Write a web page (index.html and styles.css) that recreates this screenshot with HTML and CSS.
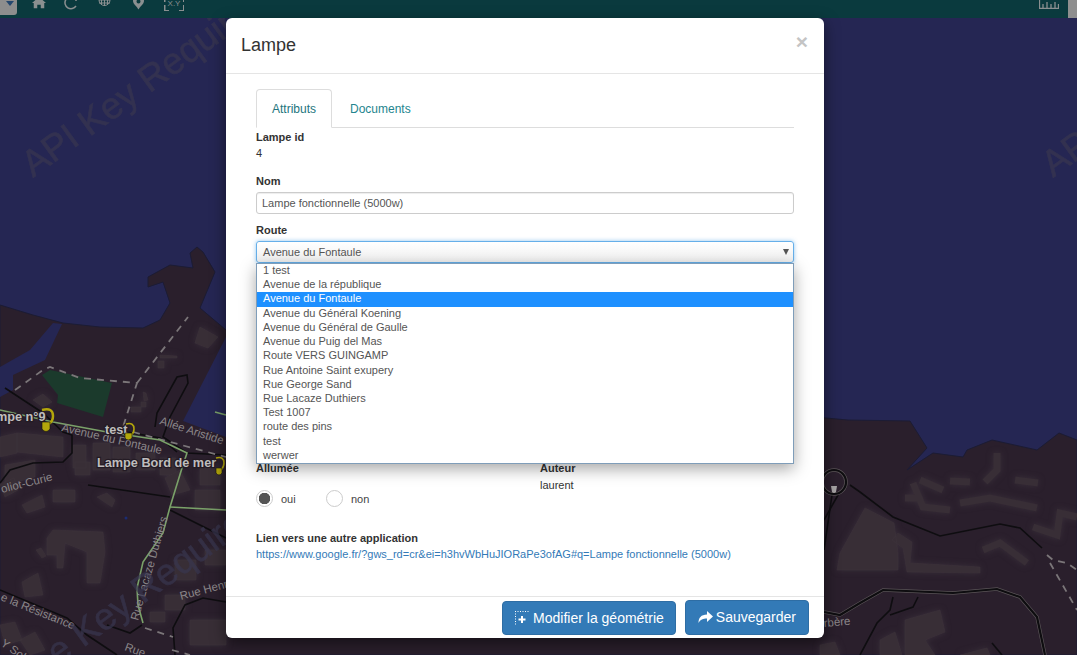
FILE: index.html
```html
<!DOCTYPE html>
<html lang="fr">
<head>
<meta charset="utf-8">
<title>Lampe</title>
<link rel="stylesheet" href="styles.css">
</head>
<body>
<svg class="map" viewBox="0 0 1077 655" width="1077" height="655" aria-hidden="true">
  <rect class="water" x="0" y="0" width="1077" height="655"/>
  <path class="land" d="M0 305L33 315L63 323L100 327L143 328L160 320L170 303L163 282L148 287L148 277L170 265L193 268L190 253L197 247L203 252L215 272L200 308L226 330L400 380L848 420L910 421L927 448L907 470L933 453L963 457L967 450L992 440L1037 450L1059 433L1077 440V655H0Z"/>
  <path class="water" d="M53 323L62 324L45 360L13 375L13 390L0 397V367L30 350ZM226 337L183 421L226 437Z"/>
  <path class="park" d="M42 375L50 370L112 383L103 417L57 403L58 395Z"/>
  <g class="bld">
    <path d="M0 437L17 433L17 453L0 457ZM17 433L63 437L63 457L17 452ZM33 400L43 394L52 402L43 407ZM200 327L218 337L208 348L195 343Z"/>
    <path d="M160 355L177 356V358H160ZM158 361H164V368H158ZM143 392L146 393L148 400L144 401ZM131 407H141V412H131ZM141 402H146V407H141ZM73 445H86V468H73ZM93 443H110V470H93ZM113 447H130V472H113ZM136 453H155V470H136ZM160 458H176V475H160ZM75 462H90V475H75ZM200 468H220V485H200Z"/>
    <path d="M47 538L53 530L103 532L105 552L100 583L87 583L87 552L65 543L63 568L57 568L57 555L47 555Z"/>
    <path d="M53 490H75V502H53ZM22 505L42 495L45 507L27 513ZM0 484L14 478L18 490L5 497ZM97 497L107 493L115 500L112 507ZM22 582L38 573L43 595L25 597ZM36 550L41 548L46 556L42 558ZM5 465L35 460V477L5 485ZM165 478L180 470L190 490L172 495ZM195 490H220V510H195ZM175 560H196V580H175ZM205 550H226V565H205ZM165 595H185V610H165ZM190 620H226V645H190ZM150 612H165V622H150ZM0 625L15 622L22 640L5 645ZM20 640L35 632L45 650L30 655Z"/>
    <path d="M865 508L894 523L898 553L898 570L837 570L840 553ZM898 533L912 542L910 563L980 567L980 573L907 572L903 548L892 540Z"/>
    <path d="M820 645L835 642L840 655H820ZM880 640L895 632L902 655H880ZM905 620L940 610L945 632L925 640L935 655H905ZM960 655L987 648L990 655Z"/>
  </g>
  <g class="bldl">
    <polyline points="997,453 997,470 985,482"/>
    <polyline points="1015,480 1038,483"/>
    <polyline points="950,481 970,482"/>
    <polyline points="913,483 923,507 950,510"/>
    <polyline points="905,498 920,498"/>
    <polyline points="920,480 943,490"/>
    <polyline points="960,503 990,498 1037,508"/>
    <polyline points="1033,527 1057,535 1060,513 1077,517"/>
    <polyline points="983,550 1000,543 1027,563"/>
  </g>
  <g class="road">
    <polyline points="5,388 43,413 63,432 72,435 72,453 63,462 33,463 10,470 0,483"/>
    <polyline points="155,427 157,413 177,377 187,375 188,383 170,417 163,437 187,453 226,455"/>
    <polyline points="127,432 160,438 177,452"/>
    <polyline points="88,485 170,497"/>
    <polyline points="170,510 226,538"/>
    <polyline points="0,590 67,618 87,635 117,655"/>
    <polyline points="107,625 130,633 142,625"/>
    <polyline points="175,655 173,628 185,605 203,598 226,602"/>
    <polyline points="850,485 860,492 893,517 940,536 1000,524 1020,528 1042,548"/>
    <polyline points="893,597 890,610 877,623 860,655"/>
    <polyline points="918,597 913,607 890,615"/>
    <polyline points="992,643 1002,655"/>
    <polyline points="832,495 824,550"/>
    <polyline points="838,495 824,520"/>
  </g>
  <g class="casing">
    <polyline points="824,612 840,615 860,603 883,590 953,593 997,589 1020,597 1037,617 1045,655"/>
    <circle cx="834" cy="482" r="12"/>
  </g>
  <g class="core">
    <polyline points="824,612 840,615 860,603 883,590 953,593 997,589 1020,597 1037,617 1045,655"/>
    <circle cx="834" cy="482" r="12"/>
  </g>
  <g class="dash">
    <polyline points="15,390 43,370 50,367 80,378 137,383 123,427"/>
    <polyline points="137,383 188,317"/>
    <polyline points="133,432 226,457"/>
    <polyline points="145,628 173,637"/>
    <polyline points="172,650 190,655"/>
    <polyline points="1047,555 1053,560 1067,563 1077,570"/>
    <polyline points="1050,563 1077,610"/>
  </g>
  <g class="green">
    <polyline points="0,410 53,422 107,432 160,440 187,453 182,468 170,507 163,533 143,562 137,588 138,605 143,623"/>
    <polyline points="170,507 226,510"/>
    <polyline points="215,412 226,415"/>
  </g>
  <circle class="dot" cx="126" cy="518" r="1.5"/>
  <g class="street">
    <text transform="translate(61 431) rotate(13)">Avenue du Fontaule</text>
    <text transform="translate(159 424) rotate(18)">Allée Aristide</text>
    <text transform="translate(2 493) rotate(-14)">oliot-Curie</text>
    <text transform="translate(0 600) rotate(22)">e la Résistance</text>
    <text transform="translate(138 621) rotate(-74)">Rue Lacaze Duthiers</text>
    <text transform="translate(181 600) rotate(-15)">Rue Henri</text>
    <text transform="translate(124 650) rotate(20)">Rue</text>
    <text transform="translate(0 645) rotate(35)">Y Sol</text>
    <text x="824" y="627" transform="rotate(-5 824 627)">rbère</text>
  </g>
  <g class="lamplabel">
    <text x="-4" y="421">mpe n°9</text>
    <text x="105" y="434">test</text>
    <text x="97" y="467">Lampe Bord de mer</text>
  </g>
  <g class="lamp">
    <path class="bulbring" d="M42 410Q53 407 53 416Q53 421 49 424"/>
    <path class="bulbbody" d="M42 422H50V429Q46 434 42 429Z"/>
    <path class="bulbring thin" d="M126 424Q134 422 134 429Q134 433 131 435"/>
    <path class="bulbbody" d="M125 433H132V438Q128 442 125 438Z"/>
    <path class="bulbring thin" d="M216 458Q224 456 224 463Q224 467 221 470"/>
    <path class="bulbbody" d="M216 468H222V473Q219 477 216 473Z"/>
    <path class="bulbgrey" d="M831 486H837L836 492Q834 494 832 492Z"/>
  </g>
  <g class="wm">
    <text transform="translate(33 178) rotate(-36)">API Key Required</text>
    <text transform="translate(1053 178) rotate(-36)">API</text>
    <text transform="translate(58 666) rotate(-36)">e Key Required</text>
  </g>
</svg>

<header class="topbar">
  <div class="drop"><span class="caret"></span></div>
  <nav class="tools">
    <svg class="ico home" width="14" height="14" viewBox="0 0 16 14"><path d="M8 0L16 7H14V13H10V9H6V13H2V7H0Z"/></svg>
    <svg class="ico stroke reload" width="14" height="14" viewBox="0 0 14 14"><path d="M12 10A6 6 0 1 1 10 1.500L12 0V5"/></svg>
    <svg class="ico stroke thin globe" width="13" height="14" viewBox="0 0 13 14"><circle cx="6.500" cy="4" r="5.500"/><path d="M1 4H12M1 1H12M1 7H12M6.500 -2V10M3.500 -1V9M9.500 -1V9"/></svg>
    <svg class="pin" width="11" height="10" viewBox="0 0 11 10"><path fill-rule="evenodd" d="M0 1A5.500 5.500 0 0 1 11 1C11 4 7 6.500 5.500 9.500C4 6.500 0 4 0 1ZM5.500 -.5A2 2 0 1 0 5.500 3.500A2 2 0 1 0 5.500 -.5Z"/></svg>
    <span class="xy">X.Y</span>
  </nav>
  <div class="topright">
    <svg class="ruler" width="20" height="10" viewBox="0 0 20 10"><path d="M.5 0V9.500H19.500V5M4 9V5M8 9V3M12 9V5M16 9V3"/></svg>
    <div class="greytab"></div>
  </div>
</header>

<section class="modal">
  <div class="modal-head">
    <h4>Lampe</h4>
    <span class="close">×</span>
  </div>
  <div class="modal-body">
    <ul class="tabs">
      <li class="tab active">Attributs</li>
      <li class="tab">Documents</li>
    </ul>
    <div class="group first">
      <label>Lampe id</label>
      <div class="value">4</div>
    </div>
    <div class="group">
      <label>Nom</label>
      <div class="input">Lampe fonctionnelle (5000w)</div>
    </div>
    <div class="group route">
      <label>Route</label>
      <div class="input select">Avenue du Fontaule<span class="arrow"></span></div>
      <ul class="options">
        <li>1 test</li>
        <li>Avenue de la république</li>
        <li class="sel">Avenue du Fontaule</li>
        <li>Avenue du Général Koening</li>
        <li>Avenue du Général de Gaulle</li>
        <li>Avenue du Puig del Mas</li>
        <li>Route VERS GUINGAMP</li>
        <li>Rue Antoine Saint exupery</li>
        <li>Rue George Sand</li>
        <li>Rue Lacaze Duthiers</li>
        <li>Test 1007</li>
        <li>route des pins</li>
        <li>test</li>
        <li>werwer</li>
      </ul>
    </div>
    <div class="cols">
      <div class="col">
        <label>Allumée</label>
        <div class="radios">
          <span class="radio on"></span><span class="rlabel">oui</span>
          <span class="radio"></span><span class="rlabel">non</span>
        </div>
      </div>
      <div class="col">
        <label>Auteur</label>
        <div class="value author">laurent</div>
      </div>
    </div>
    <div class="group linkgroup">
      <label>Lien vers une autre application</label>
      <a class="link">https://www.google.fr/?gws_rd=cr&amp;ei=h3hvWbHuJIORaPe3ofAG#q=Lampe fonctionnelle (5000w)</a>
    </div>
  </div>
  <div class="modal-foot">
    <button class="btn low">
      <svg class="btnico" width="15" height="15" viewBox="0 0 15 15"><path class="dots" d="M.5 0V15M0 .5H15"/><path class="plus" d="M6 5H8V7.500H10.500V9.500H8V12H6V9.500H3.500V7.500H6Z"/></svg>
      Modifier la géométrie
    </button>
    <button class="btn">
      <svg class="btnico" width="15" height="13" viewBox="0 0 15 13"><path class="plus" d="M9 0L15 5.500L9 11V7.500C5 7.500 2.500 8.500 .5 12C.5 7 3 3.500 9 3.500Z"/></svg>
      Sauvegarder
    </button>
  </div>
</section>
</body>
</html>
```
FILE: styles.css
```css
* { box-sizing: border-box; }
html, body { margin: 0; height: 100%; }
body {
  position: relative;
  width: 1077px;
  height: 655px;
  overflow: hidden;
  background: #262552;
  font-family: "Liberation Sans", Arial, sans-serif;
  color: #333;
}

/* map canvas */
.map { position: absolute; left: 0; top: 0; display: block; }
.water { fill: #252653; }
.land { fill: #2a1f2c; stroke: #1c1c34; stroke-width: 1; }
.park { fill: #1b3a2c; }
.bld { fill: #382e36; stroke: #3f343c; stroke-width: .5; filter: drop-shadow(0 0 3px rgba(70, 60, 70, .55)); }
.bldl { filter: drop-shadow(0 0 3px rgba(70, 60, 70, .55)); }
.bldl polyline { fill: none; stroke: #382e36; stroke-width: 7; }
.road polyline { fill: none; stroke: #0e0d10; stroke-width: 1.600; }
.casing polyline, .casing circle { fill: none; stroke: #5b5558; stroke-width: 3.500; }
.core polyline, .core circle { fill: none; stroke: #0e0d10; stroke-width: 2.200; }
.dash polyline { fill: none; stroke: #7b7679; stroke-width: 1.800; stroke-dasharray: 7 6; }
.green polyline { fill: none; stroke: #7aa169; stroke-width: 1.600; }
.dot { fill: #1b2c73; }
.street text { font-size: 11.500px; fill: #8b8689; }
.lamplabel text {
  font-size: 12.700px;
  font-weight: 700;
  fill: #bfbdbd;
  stroke: #241b24;
  stroke-width: 2.500px;
  paint-order: stroke;
}
.bulbring { fill: none; stroke: #b3a60b; stroke-width: 2.500; }
.bulbring.thin { stroke-width: 1.600; }
.bulbbody { fill: #b3a60b; stroke: #15120f; stroke-width: .6; }
.bulbgrey { fill: #a8a5a6; }
.wm text { font-size: 37px; fill: #393750; stroke: #393750; stroke-width: .6; opacity: .7; }

/* top bar */
.topbar {
  position: relative;
  height: 18px;
  background: #0a3a3e;
  display: flex;
  align-items: flex-start;
  overflow: hidden;
}
.drop {
  width: 17px;
  height: 15px;
  background: #8d8d8d;
  border-bottom-right-radius: 3px;
  padding: 1px 0 0 6px;
}
.caret {
  display: block;
  width: 0;
  height: 0;
  border-left: 4px solid transparent;
  border-right: 4px solid transparent;
  border-top: 5px solid #24476e;
}
.tools { display: flex; align-items: flex-start; margin-left: 15px; }
.ico { fill: #8a8f90; display: block; margin-top: -4px; }
.ico.stroke { fill: none; stroke: #8a8f90; stroke-width: 1.500; }
.ico.stroke.thin { stroke-width: 1; }
.reload { margin-left: 18px; }
.globe { margin-left: 20px; }
.pin { display: block; fill: #8a8f90; margin-left: 22px; }
.xy {
  width: 20px;
  height: 11px;
  margin-left: 20px;
  font-size: 8px;
  line-height: 8px;
  text-align: center;
  color: #8a8f90;
  background:
    linear-gradient(#8a8f90, #8a8f90) left bottom / 5px 1.500px no-repeat,
    linear-gradient(#8a8f90, #8a8f90) right bottom / 5px 1.500px no-repeat,
    linear-gradient(#8a8f90, #8a8f90) left bottom / 1.500px 6px no-repeat,
    linear-gradient(#8a8f90, #8a8f90) right bottom / 1.500px 6px no-repeat,
    linear-gradient(#8a8f90, #8a8f90) left top / 1.500px 2px no-repeat,
    linear-gradient(#8a8f90, #8a8f90) right top / 1.500px 2px no-repeat;
}
.topright { margin-left: auto; display: flex; align-items: flex-start; gap: 9px; }
.ruler { fill: none; stroke: #8a8f90; stroke-width: 1.300; display: block; margin-top: -1px; }
.greytab { width: 9px; height: 18px; background: #8f8f8f; }

/* modal */
.modal {
  position: absolute;
  left: 226px;
  top: 18px;
  width: 598px;
  height: 620px;
  background: #fff;
  border-radius: 6px;
  box-shadow: 0 5px 15px rgba(0, 0, 0, .5);
  display: flex;
  flex-direction: column;
}
.modal-head {
  height: 56px;
  flex: none;
  border-bottom: 1px solid #e5e5e5;
  padding: 15px;
  display: flex;
  justify-content: space-between;
  align-items: flex-start;
}
.modal-head h4 {
  margin: 0;
  font-size: 18px;
  line-height: 25px;
  font-weight: 400;
  color: #333;
}
.close {
  font-size: 21px;
  font-weight: 700;
  line-height: 18px;
  color: #c4c4c4;
  margin: 0 1px 0 0;
}
.modal-body { flex: 1; padding: 15px 30px 0; font-size: 11px; }
.tabs {
  list-style: none;
  margin: 0;
  padding: 0;
  height: 39px;
  display: flex;
  border-bottom: 1px solid #ddd;
}
.tab {
  height: 38px;
  padding: 0 15px;
  font-size: 12px;
  line-height: 38px;
  color: #23858e;
  margin-right: 2px;
  border: 1px solid transparent;
  border-radius: 4px 4px 0 0;
}
.tab.active {
  height: 39px;
  color: #23757d;
  background: #fff;
  border-color: #ddd;
  border-bottom-color: #fff;
}
label {
  display: block;
  font-size: 11px;
  font-weight: 700;
  line-height: 13px;
  color: #333;
}
.value { font-size: 11px; line-height: 13px; margin-top: 3px; color: #333; }
.value.author { margin-top: 4px; }
.group { margin-top: 15px; }
.group.first { margin-top: 3px; }
.input {
  margin-top: 4px;
  height: 22px;
  border: 1px solid #ccc;
  border-radius: 3px;
  padding: 0 5px;
  font-size: 11px;
  line-height: 20px;
  color: #555;
  background: #fff;
  box-shadow: inset 0 1px 1px rgba(0, 0, 0, .075);
}
.group.route { position: relative; height: 239px; margin-top: 10px; }
.input.select {
  position: relative;
  padding-left: 6px;
  border-color: #66afe9;
  background: linear-gradient(#fff, #f0f0f0);
  box-shadow: 0 0 4px rgba(102, 175, 233, .7);
}
.arrow {
  position: absolute;
  right: 4px;
  top: 7px;
  border-left: 3.500px solid transparent;
  border-right: 3.500px solid transparent;
  border-top: 6px solid #555;
}
.options {
  position: absolute;
  left: 0;
  right: 0;
  top: 39px;
  height: 201px;
  margin: 0;
  padding: 0;
  list-style: none;
  background: #fff;
  border: 1px solid #7f9db9;
  box-shadow: 0 5px 15px rgba(0, 0, 0, .35);
  display: grid;
  grid-template-rows: repeat(14, 1fr);
}
.options li {
  padding: 0 6px;
  font-size: 11px;
  line-height: 12px;
  color: #555;
}
.options li.sel { background: #1e90ff; color: #fff; }
.cols { display: flex; margin-top: -1px; }
.col { flex: 0 0 284px; }
.radios { display: flex; align-items: center; margin-top: 15px; height: 17px; }
.radio {
  width: 17px;
  height: 17px;
  border: 1px solid #ccc;
  border-radius: 50%;
  flex: none;
  background: #fff;
}
.radio.on {
  background: radial-gradient(circle, #555 0, #555 5.500px, #fff 6px);
}
.rlabel { font-size: 11px; color: #444; margin: 0 30px 0 8px; width: 15px; }
.linkgroup { margin-top: 25px; }
.link { display: block; margin-top: 2px; line-height: 15px; font-size: 11px; color: #337ab7; white-space: nowrap; }
.modal-foot {
  flex: none;
  height: 42px;
  border-top: 1px solid #e5e5e5;
  padding: 3px 15px 0 0;
  display: flex;
  justify-content: flex-end;
  align-items: flex-start;
  gap: 9px;
}
.btn {
  height: 35px;
  padding: 0 12px;
  font: 14px/33px "Liberation Sans", Arial, sans-serif;
  color: #fff;
  background: #337ab7;
  border: 1px solid #2e6da4;
  border-radius: 4px;
  display: flex;
  align-items: center;
  gap: 3px;
}
.btn.low { height: 34px; margin-top: 1px; padding-right: 11px; }
.btnico { display: block; flex: none; }
.dots { fill: none; stroke: #fff; stroke-dasharray: 1 1.500; }
.plus { fill: #fff; }
```
